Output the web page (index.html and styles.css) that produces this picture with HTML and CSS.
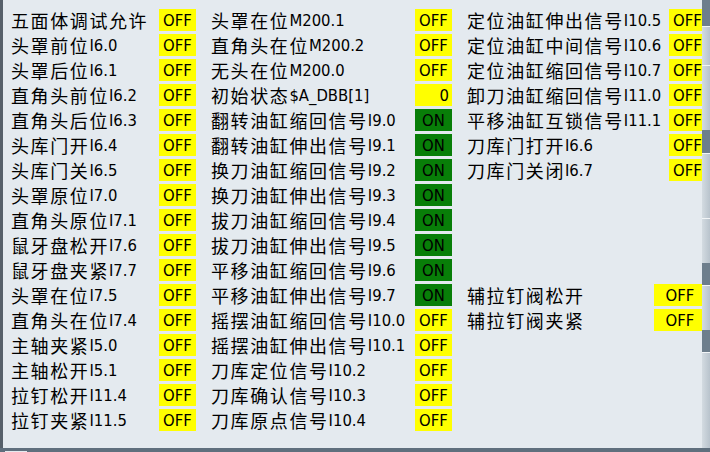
FILE: index.html
```html
<!DOCTYPE html>
<html lang="zh-CN">
<head>
<meta charset="utf-8">
<title>五面体调试</title>
<link rel="stylesheet" href="styles.css">
</head>
<body>
<div class="screen">
  <div class="main">
    <div class="panel">
      <div class="col c1">
        <div class="row"><span class="lbl"><span class="zh">五面体调试允许</span></span><span class="val off">OFF</span></div>
        <div class="row"><span class="lbl"><span class="zh">头罩前位</span><span class="en">I6.0</span></span><span class="val off">OFF</span></div>
        <div class="row"><span class="lbl"><span class="zh">头罩后位</span><span class="en">I6.1</span></span><span class="val off">OFF</span></div>
        <div class="row"><span class="lbl"><span class="zh">直角头前位</span><span class="en">I6.2</span></span><span class="val off">OFF</span></div>
        <div class="row"><span class="lbl"><span class="zh">直角头后位</span><span class="en">I6.3</span></span><span class="val off">OFF</span></div>
        <div class="row"><span class="lbl"><span class="zh">头库门开</span><span class="en">I6.4</span></span><span class="val off">OFF</span></div>
        <div class="row"><span class="lbl"><span class="zh">头库门关</span><span class="en">I6.5</span></span><span class="val off">OFF</span></div>
        <div class="row"><span class="lbl"><span class="zh">头罩原位</span><span class="en">I7.0</span></span><span class="val off">OFF</span></div>
        <div class="row"><span class="lbl"><span class="zh">直角头原位</span><span class="en">I7.1</span></span><span class="val off">OFF</span></div>
        <div class="row"><span class="lbl"><span class="zh">鼠牙盘松开</span><span class="en">I7.6</span></span><span class="val off">OFF</span></div>
        <div class="row"><span class="lbl"><span class="zh">鼠牙盘夹紧</span><span class="en">I7.7</span></span><span class="val off">OFF</span></div>
        <div class="row"><span class="lbl"><span class="zh">头罩在位</span><span class="en">I7.5</span></span><span class="val off">OFF</span></div>
        <div class="row"><span class="lbl"><span class="zh">直角头在位</span><span class="en">I7.4</span></span><span class="val off">OFF</span></div>
        <div class="row"><span class="lbl"><span class="zh">主轴夹紧</span><span class="en">I5.0</span></span><span class="val off">OFF</span></div>
        <div class="row"><span class="lbl"><span class="zh">主轴松开</span><span class="en">I5.1</span></span><span class="val off">OFF</span></div>
        <div class="row"><span class="lbl"><span class="zh">拉钉松开</span><span class="en">I11.4</span></span><span class="val off">OFF</span></div>
        <div class="row"><span class="lbl"><span class="zh">拉钉夹紧</span><span class="en">I11.5</span></span><span class="val off">OFF</span></div>
      </div>
      <div class="col c2">
        <div class="row"><span class="lbl"><span class="zh">头罩在位</span><span class="en">M200.1</span></span><span class="val off">OFF</span></div>
        <div class="row"><span class="lbl"><span class="zh">直角头在位</span><span class="en">M200.2</span></span><span class="val off">OFF</span></div>
        <div class="row"><span class="lbl"><span class="zh">无头在位</span><span class="en">M200.0</span></span><span class="val off">OFF</span></div>
        <div class="row"><span class="lbl"><span class="zh">初始状态</span><span class="en">$A_DBB[1]</span></span><span class="val num">0</span></div>
        <div class="row"><span class="lbl"><span class="zh">翻转油缸缩回信号</span><span class="en">I9.0</span></span><span class="val on">ON</span></div>
        <div class="row"><span class="lbl"><span class="zh">翻转油缸伸出信号</span><span class="en">I9.1</span></span><span class="val on">ON</span></div>
        <div class="row"><span class="lbl"><span class="zh">换刀油缸缩回信号</span><span class="en">I9.2</span></span><span class="val on">ON</span></div>
        <div class="row"><span class="lbl"><span class="zh">换刀油缸伸出信号</span><span class="en">I9.3</span></span><span class="val on">ON</span></div>
        <div class="row"><span class="lbl"><span class="zh">拔刀油缸缩回信号</span><span class="en">I9.4</span></span><span class="val on">ON</span></div>
        <div class="row"><span class="lbl"><span class="zh">拔刀油缸伸出信号</span><span class="en">I9.5</span></span><span class="val on">ON</span></div>
        <div class="row"><span class="lbl"><span class="zh">平移油缸缩回信号</span><span class="en">I9.6</span></span><span class="val on">ON</span></div>
        <div class="row"><span class="lbl"><span class="zh">平移油缸伸出信号</span><span class="en">I9.7</span></span><span class="val on">ON</span></div>
        <div class="row"><span class="lbl"><span class="zh">摇摆油缸缩回信号</span><span class="en">I10.0</span></span><span class="val off">OFF</span></div>
        <div class="row"><span class="lbl"><span class="zh">摇摆油缸伸出信号</span><span class="en">I10.1</span></span><span class="val off">OFF</span></div>
        <div class="row"><span class="lbl"><span class="zh">刀库定位信号</span><span class="en">I10.2</span></span><span class="val off">OFF</span></div>
        <div class="row"><span class="lbl"><span class="zh">刀库确认信号</span><span class="en">I10.3</span></span><span class="val off">OFF</span></div>
        <div class="row"><span class="lbl"><span class="zh">刀库原点信号</span><span class="en">I10.4</span></span><span class="val off">OFF</span></div>
      </div>
      <div class="col c3">
        <div class="row"><span class="lbl"><span class="zh">定位油缸伸出信号</span><span class="en">I10.5</span></span><span class="val off">OFF</span></div>
        <div class="row"><span class="lbl"><span class="zh">定位油缸中间信号</span><span class="en">I10.6</span></span><span class="val off">OFF</span></div>
        <div class="row"><span class="lbl"><span class="zh">定位油缸缩回信号</span><span class="en">I10.7</span></span><span class="val off">OFF</span></div>
        <div class="row"><span class="lbl"><span class="zh">卸刀油缸缩回信号</span><span class="en">I11.0</span></span><span class="val off">OFF</span></div>
        <div class="row"><span class="lbl"><span class="zh">平移油缸互锁信号</span><span class="en">I11.1</span></span><span class="val off">OFF</span></div>
        <div class="row"><span class="lbl"><span class="zh">刀库门打开</span><span class="en">I6.6</span></span><span class="val off">OFF</span></div>
        <div class="row"><span class="lbl"><span class="zh">刀库门关闭</span><span class="en">I6.7</span></span><span class="val off">OFF</span></div>
        <div class="row r12"><span class="lbl"><span class="zh">辅拉钉阀松开</span></span><span class="val off wide">OFF</span></div>
        <div class="row r13"><span class="lbl"><span class="zh">辅拉钉阀夹紧</span></span><span class="val off wide">OFF</span></div>
      </div>
    </div>
    <div class="softkeys">
      <div class="sk-dark h26"></div>
      <div class="sk h39"></div>
      <div class="sk h65"></div>
      <div class="sk-dark h23"></div>
      <div class="sk h65"></div>
      <div class="sk h45"></div>
      <div class="sk-dark h22"></div>
      <div class="sk h45"></div>
      <div class="sk-dark h22"></div>
      <div class="sk grow"></div>
    </div>
  </div>
  <div class="footer"><span class="foot-tab"></span></div>
</div>
</body>
</html>
```

FILE: styles.css
```css
* { box-sizing: border-box; }
html, body { margin: 0; padding: 0; }
body {
  width: 710px;
  height: 452px;
  overflow: hidden;
  background: #5f6f7d;
  font-family: "Noto Sans CJK SC", "DejaVu Sans", sans-serif;
  color: #000;
}
.screen {
  width: 710px;
  height: 452px;
  display: flex;
  flex-direction: column;
}
.main {
  height: 448px;
  display: flex;
}
.panel {
  width: 702px;
  height: 448px;
  flex-shrink: 0;
  background: #e4eaef;
  border-left: 3px solid #56606a;
  padding: 9px 0 0 8px;
  display: flex;
  overflow: hidden;
}
.col {
  flex-shrink: 0;
  display: grid;
  grid-template-rows: repeat(17, 22px);
  row-gap: 3px;
  align-content: start;
}
.c1 { width: 185px; margin-right: 15px; }
.c2 { width: 241px; margin-right: 15px; }
.c3 { width: 239px; }
.r12 { grid-row: 12; }
.r13 { grid-row: 13; }
.row {
  display: flex;
  align-items: center;
  height: 22px;
}
.lbl {
  flex: 1;
  white-space: nowrap;
  line-height: 22px;
  display: flex;
  align-items: center;
}
.zh {
  font-family: "Noto Sans CJK SC", sans-serif;
  font-size: 18px;
  letter-spacing: 1.6px;
}
.en {
  font-family: "DejaVu Sans Condensed", "DejaVu Sans", sans-serif;
  font-stretch: condensed;
  font-size: 16.5px;
  position: relative;
  top: 1px;
}
.val {
  flex-shrink: 0;
  width: 37px;
  height: 22px;
  line-height: 23px;
  font-family: "DejaVu Sans Condensed", "DejaVu Sans", sans-serif;
  font-stretch: condensed;
  font-size: 16.5px;
  text-align: center;
}
.off { background: #ffff00; }
.num { background: #ffff00; text-align: right; padding-right: 3px; }
.on { background: #087e08; }
.wide { width: 52px; }

.softkeys {
  width: 8px;
  flex-shrink: 0;
  display: flex;
  flex-direction: column;
  background: #6d7e8c;
}
.sk-dark { background: #6d7e8c; flex-shrink: 0; }
.sk {
  flex-shrink: 0;
  background: linear-gradient(to right, #d3dbe1, #b8c3cc);
  border-top: 1px solid #f2f5f7;
}
.h22 { height: 22px; }
.h23 { height: 23px; }
.h26 { height: 26px; }
.h39 { height: 39px; }
.h45 { height: 45px; }
.h65 { height: 65px; }
.grow { flex: 1; }

.footer {
  height: 4px;
  background: #5f6f7d;
}
.foot-tab {
  display: block;
  margin: 3px 0 0 5px;
  width: 22px;
  height: 1px;
  background: #e4eaef;
}
```
